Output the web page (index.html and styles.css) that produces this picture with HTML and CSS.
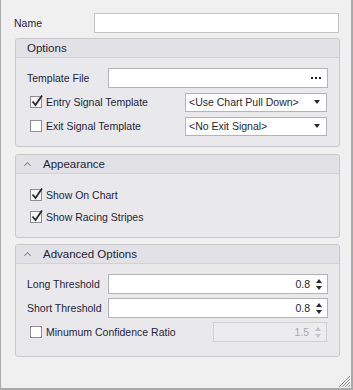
FILE: index.html
```html
<!DOCTYPE html>
<html lang="en">
  <head>
    <title>Strategy Properties</title>
    <link rel="stylesheet" href="styles.css">
  </head>
  <body>
    <div class="window">
      <div class="name-row">
        <span class="label name-label">Name</span>
        <div class="textbox name-box"></div>
      </div>

      <div class="group options">
        <div class="group-head">
          <span class="group-title">Options</span>
        </div>
        <div class="group-body">
          <div class="row">
            <span class="label field-label">Template File</span>
            <div class="textbox wide">
              <span class="ellipsis"><i></i><i></i><i></i></span>
            </div>
          </div>
          <div class="row">
            <label class="check">
              <span class="box checked">
                <svg width="14" height="14" viewBox="0 0 14 14"><path d="M2.5 7.5 L5.5 11 L12 1.5" fill="none" stroke="#2b2b33" stroke-width="1.8"/></svg>
              </span>
              <span class="label">Entry Signal Template</span>
            </label>
            <div class="combo">
              <span>&lt;Use Chart Pull Down&gt;</span>
              <span class="caret"></span>
            </div>
          </div>
          <div class="row">
            <label class="check">
              <span class="box"></span>
              <span class="label">Exit Signal Template</span>
            </label>
            <div class="combo">
              <span>&lt;No Exit Signal&gt;</span>
              <span class="caret"></span>
            </div>
          </div>
        </div>
      </div>

      <div class="group appearance">
        <div class="group-head">
          <span class="chevron"></span>
          <span class="group-title">Appearance</span>
        </div>
        <div class="group-body checks">
          <label class="check">
            <span class="box checked">
              <svg width="14" height="14" viewBox="0 0 14 14"><path d="M2.5 7.5 L5.5 11 L12 1.5" fill="none" stroke="#2b2b33" stroke-width="1.8"/></svg>
            </span>
            <span class="label">Show On Chart</span>
          </label>
          <label class="check">
            <span class="box checked">
              <svg width="14" height="14" viewBox="0 0 14 14"><path d="M2.5 7.5 L5.5 11 L12 1.5" fill="none" stroke="#2b2b33" stroke-width="1.8"/></svg>
            </span>
            <span class="label">Show Racing Stripes</span>
          </label>
        </div>
      </div>

      <div class="group advanced">
        <div class="group-head">
          <span class="chevron"></span>
          <span class="group-title">Advanced Options</span>
        </div>
        <div class="group-body">
          <div class="row">
            <span class="label field-label">Long Threshold</span>
            <div class="textbox wide spin">
              <span class="value">0.8</span>
              <span class="arrows"><span class="up"></span><span class="down"></span></span>
            </div>
          </div>
          <div class="row">
            <span class="label field-label">Short Threshold</span>
            <div class="textbox wide spin">
              <span class="value">0.8</span>
              <span class="arrows"><span class="up"></span><span class="down"></span></span>
            </div>
          </div>
          <div class="row">
            <label class="check">
              <span class="box"></span>
              <span class="label">Minumum Confidence Ratio</span>
            </label>
            <div class="textbox spin disabled">
              <span class="value">1.5</span>
              <span class="arrows"><span class="up"></span><span class="down"></span></span>
            </div>
          </div>
        </div>
      </div>

      <div class="grip">
        <svg width="14" height="14" viewBox="0 0 14 14">
          <path d="M13 2 L2 13 M13 5 L5 13 M13 8 L8 13 M13 11 L11 13" stroke="#8c8c8c" stroke-width="1"/>
        </svg>
      </div>
    </div>
  </body>
</html>
```

FILE: styles.css
```css
body {
  margin: 0;
  font-family: "Liberation Sans", Arial, sans-serif;
  font-size: 10.5px;
  color: #1f1f3a;
}

.window {
  position: relative;
  width: 353px;
  height: 390px;
  box-sizing: border-box;
  background: #f0f0f0;
  border-left: 1px solid #a9a9a9;
  border-right: 2px solid #a9a9a9;
  border-bottom: 2px solid #a9a9a9;
  padding: 13px 0 0 13px;
}

.name-row {
  display: flex;
  align-items: center;
  height: 20px;
}

.name-label {
  width: 80px;
}

.textbox {
  box-sizing: border-box;
  height: 20px;
  background: #fff;
  border: 1px solid #b4b4b4;
  display: flex;
  align-items: center;
}

.name-box {
  width: 245px;
  border-color: #c4c4c4;
}

.group {
  width: 325px;
  box-sizing: border-box;
  margin-left: 1px;
  background: #e9e9ec;
  border: 1px solid #c9c9cd;
  border-radius: 3px;
}

.options {
  margin-top: 5px;
  height: 109px;
}

.appearance {
  margin-top: 7px;
  height: 84px;
}

.advanced {
  margin-top: 6px;
  height: 113px;
}

.group-head {
  height: 19px;
  box-sizing: border-box;
  display: flex;
  align-items: center;
  padding-left: 11px;
  background: #e2e2e6;
  border-bottom: 1px solid #d2d2d6;
  border-radius: 3px 3px 0 0;
  font-size: 11.5px;
}

.chevron {
  width: 4px;
  height: 4px;
  border-left: 1px solid #8a8a96;
  border-top: 1px solid #8a8a96;
  transform: rotate(45deg);
  margin: 3px 13px 0 -2px;
}

.group-body {
  display: flex;
  flex-direction: column;
  gap: 4px;
  padding: 10px 0 0 11px;
}

.row {
  display: flex;
  align-items: center;
  height: 20px;
}

.field-label {
  width: 81px;
}

.wide {
  width: 220px;
}

.ellipsis {
  display: flex;
  gap: 2px;
  margin-left: auto;
  margin-right: 6px;
}

.ellipsis i {
  width: 2px;
  height: 2px;
  background: #222;
}

.check {
  display: flex;
  align-items: center;
  gap: 4px;
  padding-left: 3px;
}

.box {
  position: relative;
  width: 12px;
  height: 12px;
  box-sizing: border-box;
  background: #fff;
  border: 1px solid #8e8e94;
}

.box.checked {
  background: #f4f4f6;
}

.box svg {
  position: absolute;
  left: -1px;
  top: -3px;
}

.combo {
  margin-left: auto;
  margin-right: 12px;
  width: 142px;
  height: 19px;
  box-sizing: border-box;
  background: #fff;
  border: 1px solid #b4b4b4;
  display: flex;
  align-items: center;
  padding-left: 3px;
}

.caret {
  margin-left: auto;
  margin-right: 6px;
  border-left: 3px solid transparent;
  border-right: 3px solid transparent;
  border-top: 4px solid #2a2a2a;
}

.checks {
  gap: 10px;
  padding-top: 15px;
}

.spin .value {
  margin-left: auto;
  margin-right: 6px;
}

.arrows {
  display: flex;
  flex-direction: column;
  gap: 3px;
  margin-right: 5px;
}

.arrows .up {
  border-left: 3px solid transparent;
  border-right: 3px solid transparent;
  border-bottom: 4px solid #2a2a2a;
}

.arrows .down {
  border-left: 3px solid transparent;
  border-right: 3px solid transparent;
  border-top: 4px solid #2a2a2a;
}

.disabled {
  margin-left: auto;
  margin-right: 12px;
  width: 114px;
  background: #ececef;
  border-color: #d0d0d4;
  color: #a8a8ad;
}

.disabled .arrows .up {
  border-bottom-color: #c4c4c8;
}

.disabled .arrows .down {
  border-top-color: #c4c4c8;
}

.grip {
  position: absolute;
  right: 0;
  bottom: 0;
  width: 14px;
  height: 14px;
}
```
